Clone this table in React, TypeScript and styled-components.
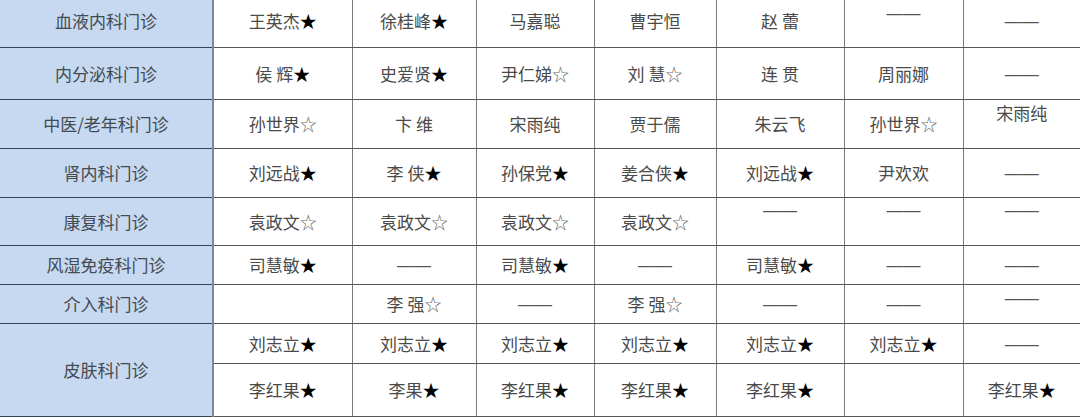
import React from 'react';
import styled, { createGlobalStyle } from 'styled-components';

const GlobalStyle = createGlobalStyle`
    html, body {
        margin: 0;
        padding: 0;
        background: #ffffff;
        overflow: hidden;
    }
    body {
        font-family: "Noto Sans CJK SC", "Noto Sans", sans-serif;
    }
`;

const Page = styled.div`
    width: 1080px;
    height: 418px;
    overflow: hidden;
`;

const Table = styled.table`
    width: 1080px;
    margin-top: -7px;
    border-collapse: collapse;
    table-layout: fixed;
    font-size: 17px;
    line-height: 20px;
    color: #4a4a4a;
`;

const DeptCell = styled.th`
    background: #c6d9f0;
    font-weight: 400;
    color: #444a52;
    text-align: center;
    vertical-align: middle;
    padding: 0;
    border-top: 1px solid #34435a;
    border-bottom: 1px solid #34435a;
    border-right: 2px solid #7d8898;
`;

const Cell = styled.td<{ $top?: number }>`
    text-align: center;
    vertical-align: ${(p) => (p.$top !== undefined ? 'top' : 'middle')};
    padding: ${(p) => (p.$top !== undefined ? `${p.$top}px 0 0` : '0')};
    border-top: 1px solid #555555;
    border-bottom: 1px solid #555555;
    border-left: 1px solid #7a7a7a;
    border-right: 1px solid #7a7a7a;
    white-space: nowrap;
    &:last-child {
        border-right: none;
    }
`;

const Row = styled.tr<{ $h: number }>`
    height: ${(p) => p.$h}px;
`;

const Star = styled.span<{ $hollow?: boolean }>`
    color: ${(p) => (p.$hollow ? '#6a6a6a' : '#000000')};
`;

const Dash = styled.span`
    font-family: "Liberation Sans", Arial, sans-serif;
    font-size: 17px;
    color: #555555;
`;

type CellData = string | { text: string; top: number };

interface RowData {
    dept?: string;
    span?: number;
    height: number;
    cells: CellData[];
}

const widths = [213, 139, 124, 118, 122, 128, 119, 117];

const rows: RowData[] = [
    {
        dept: '血液内科门诊',
        height: 54,
        cells: ['王英杰★', '徐桂峰★', '马嘉聪', '曹宇恒', '赵 蕾', { text: '——', top: 8 }, '——'],
    },
    {
        dept: '内分泌科门诊',
        height: 52,
        cells: ['侯 辉★', '史爱贤★', '尹仁娣☆', '刘 慧☆', '连 贯', '周丽娜', '——'],
    },
    {
        dept: '中医/老年科门诊',
        height: 49,
        cells: ['孙世界☆', '卞 维', '宋雨纯', '贾于儒', '朱云飞', '孙世界☆', { text: '宋雨纯', top: 3 }],
    },
    {
        dept: '肾内科门诊',
        height: 49,
        cells: ['刘远战★', '李 侠★', '孙保党★', '姜合侠★', '刘远战★', '尹欢欢', '——'],
    },
    {
        dept: '康复科门诊',
        height: 48,
        cells: [
            '袁政文☆',
            '袁政文☆',
            '袁政文☆',
            '袁政文☆',
            { text: '——', top: 1 },
            { text: '——', top: 1 },
            { text: '——', top: 1 },
        ],
    },
    {
        dept: '风湿免疫科门诊',
        height: 39,
        cells: ['司慧敏★', '——', '司慧敏★', '——', '司慧敏★', '——', '——'],
    },
    {
        dept: '介入科门诊',
        height: 39,
        cells: ['', '李 强☆', '——', '李 强☆', '——', '——', { text: '——', top: 2 }],
    },
    {
        dept: '皮肤科门诊',
        span: 2,
        height: 40,
        cells: ['刘志立★', '刘志立★', '刘志立★', '刘志立★', '刘志立★', '刘志立★', '——'],
    },
    {
        height: 53,
        cells: ['李红果★', '李果★', '李红果★', '李红果★', '李红果★', '', '李红果★'],
    },
];

const renderText = (text: string) => {
    if (text === '——') return <Dash>{text}</Dash>;
    const last = text.slice(-1);
    if (last === '★' || last === '☆') {
        return (
            <>
                {text.slice(0, -1)}
                <Star $hollow={last === '☆'}>{last}</Star>
            </>
        );
    }
    return text;
};

export default function App() {
    return (
        <Page>
            <GlobalStyle />
            <Table>
                <colgroup>
                    {widths.map((w, i) => (
                        <col key={i} style={{ width: w }} />
                    ))}
                </colgroup>
                <tbody>
                    {rows.map((row, r) => (
                        <Row key={r} $h={row.height}>
                            {row.dept && <DeptCell rowSpan={row.span || 1}>{row.dept}</DeptCell>}
                            {row.cells.map((c, i) => {
                                const text = typeof c === 'string' ? c : c.text;
                                const top = typeof c === 'string' ? undefined : c.top;
                                return (
                                    <Cell key={i} $top={top}>
                                        {renderText(text)}
                                    </Cell>
                                );
                            })}
                        </Row>
                    ))}
                </tbody>
            </Table>
        </Page>
    );
}
